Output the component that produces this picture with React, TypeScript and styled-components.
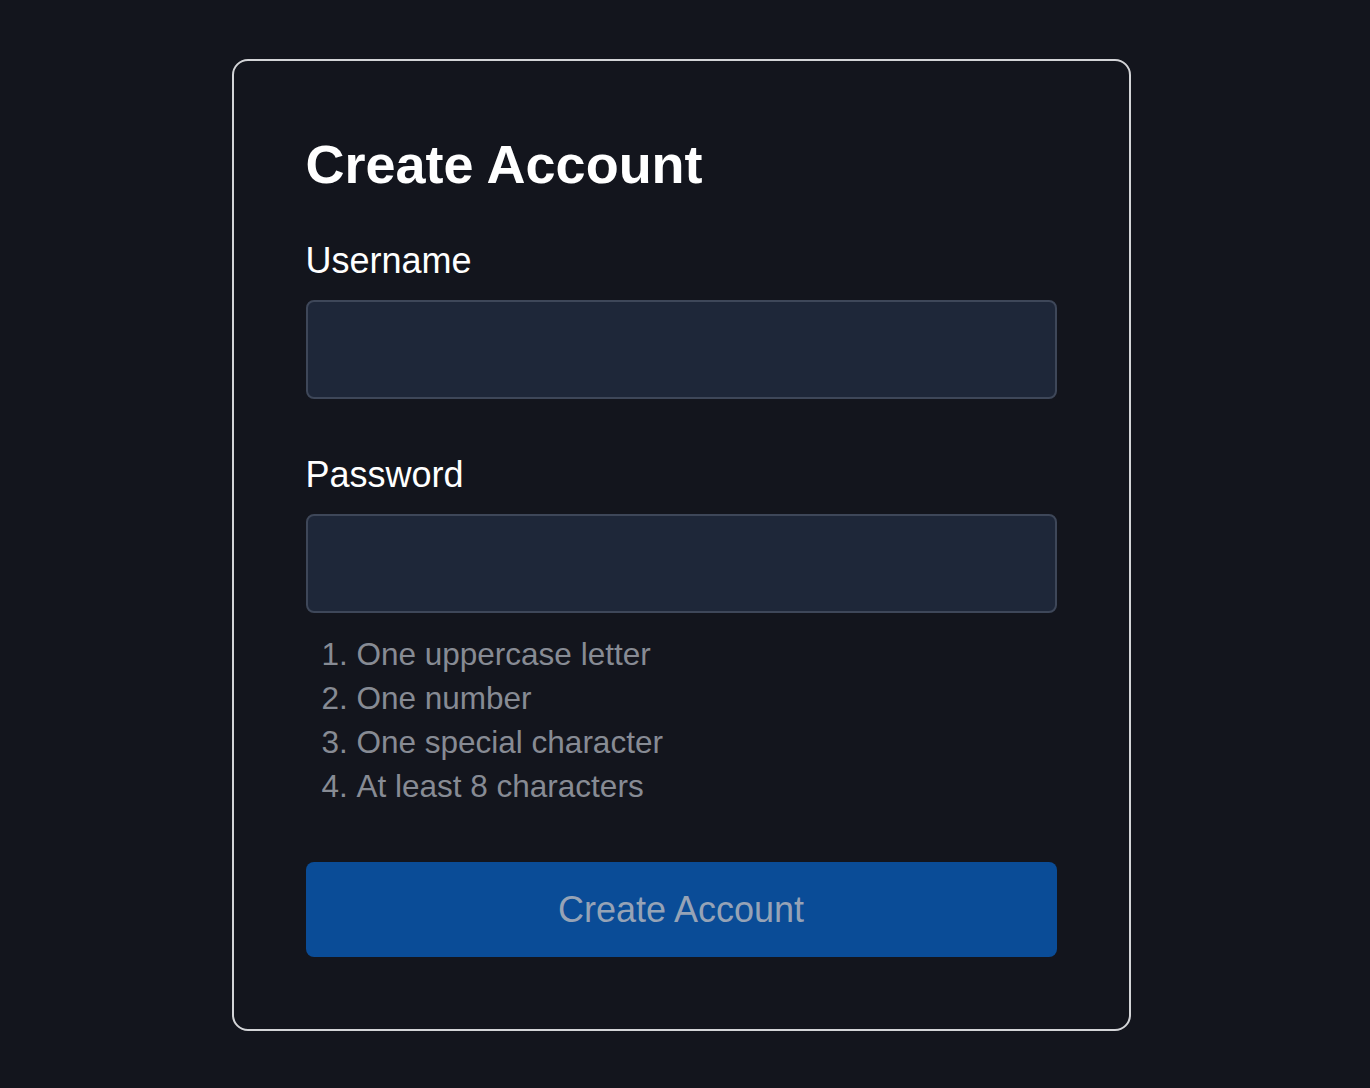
import React from 'react';
import styled, { createGlobalStyle } from 'styled-components';

const GlobalStyle = createGlobalStyle`
  html, body {
    margin: 0;
    padding: 0;
    background-color: #13151d;
    font-family: "Liberation Sans", Arial, sans-serif;
  }
`;

const Page = styled.div`
  min-height: 1088px;
  box-sizing: border-box;
  padding-top: 59px;
  display: flex;
  justify-content: center;
`;

const Card = styled.form`
  width: 899px;
  height: 972px;
  box-sizing: border-box;
  margin-right: 8px;
  padding: 72px;
  border: 2px solid #d3d4d7;
  border-radius: 16px;
  background-color: #13151d;
  display: flex;
  flex-direction: column;
`;

const Title = styled.h1`
  margin: 0 0 45px;
  font-size: 54px;
  line-height: 62px;
  font-weight: 700;
  color: #ffffff;
`;

const Label = styled.label<{ $gapTop?: number }>`
  display: block;
  margin: ${({ $gapTop }) => $gapTop ?? 0}px 0 18px;
  font-size: 36px;
  line-height: 42px;
  color: #ffffff;
`;

const Input = styled.input`
  display: block;
  width: 100%;
  height: 99px;
  box-sizing: border-box;
  padding: 0 20px;
  border: 2px solid #3e4759;
  border-radius: 8px;
  background-color: #1e2739;
  color: #ffffff;
  font-family: inherit;
  font-size: 32px;
  outline: none;
`;

const Rules = styled.ol`
  margin: 19px 0 0;
  padding-left: 51px;
  font-size: 31.5px;
  line-height: 44px;
  color: #878b94;
`;

const SubmitButton = styled.button`
  margin-top: 54px;
  width: 100%;
  height: 95px;
  border: none;
  border-radius: 8px;
  background-color: #0a4c97;
  color: #96a3b6;
  font-family: inherit;
  font-size: 36px;
  cursor: not-allowed;
`;

const rules = [
  'One uppercase letter',
  'One number',
  'One special character',
  'At least 8 characters',
];

export default function App() {
  return (
    <>
      <GlobalStyle />
      <Page>
        <Card onSubmit={(e) => e.preventDefault()}>
          <Title>Create Account</Title>
          <Label htmlFor="username">Username</Label>
          <Input id="username" type="text" />
          <Label htmlFor="password" $gapTop={55}>
            Password
          </Label>
          <Input id="password" type="password" />
          <Rules>
            {rules.map((r) => (
              <li key={r}>{r}</li>
            ))}
          </Rules>
          <SubmitButton type="submit" disabled>
            Create Account
          </SubmitButton>
        </Card>
      </Page>
    </>
  );
}
